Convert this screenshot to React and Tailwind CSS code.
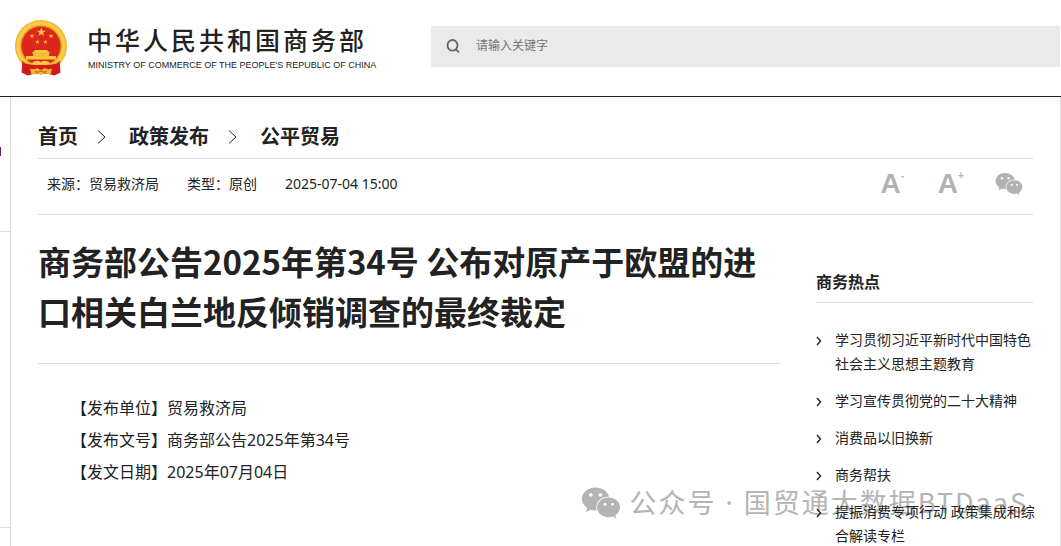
import React from 'react';
import { FaWeixin } from 'react-icons/fa';

const crumbs = ['首页', '政策发布', '公平贸易'];

const notice = [
  { label: '发布单位', value: '贸易救济局' },
  { label: '发布文号', value: '商务部公告2025年第34号' },
  { label: '发文日期', value: '2025年07月04日' },
];

const hotTopics = [
  ['学习贯彻习近平新时代中国特色', '社会主义思想主题教育'],
  ['学习宣传贯彻党的二十大精神'],
  ['消费品以旧换新'],
  ['商务帮扶'],
  ['提振消费专项行动 政策集成和综', '合解读专栏'],
];

const STAR = 'M0-1 .225-.309 .951-.309 .363.118 .588.809 0 .382-.588.809-.363.118-.951-.309-.225-.309Z';

function Emblem() {
  return (
    <svg viewBox="0 0 52 56" className="h-14 w-[52px] shrink-0" role="img" aria-label="国徽">
      <circle cx="26" cy="26" r="26" fill="#f0b02a" />
      <circle cx="26" cy="26" r="23" fill="none" stroke="#f8cb48" strokeWidth="3.500" />
      <circle cx="26" cy="26" r="19.800" fill="#dd271d" stroke="#cf8f1a" strokeWidth=".8" />
      <g fill="#f8c83a">
        <path d={STAR} transform="translate(26.3 12.2) scale(4.8)" />
        <path d={STAR} transform="translate(17 16) scale(2.6)" />
        <path d={STAR} transform="translate(36 16) scale(2.6)" />
        <path d={STAR} transform="translate(22.4 22) scale(2.4)" />
        <path d={STAR} transform="translate(30.4 22) scale(2.4)" />
        <path d="M19.500 30h13v1.500H34l1 2h-1V36h7v3.500H11V36h7v-2.500h-1l1-2h1.500Z" />
      </g>
      <path d="M18 33.500h16M18 36h16" stroke="#e39a28" strokeWidth=".5" />
      <path d="M7.500 40c1 3 5 4.500 10.500 4h16c5.500.5 9.500-1 10.500-4l1 12.500-6 3-6-1.500H18.500l-6 1.500-6-3Z" fill="#d01c19" />
      <path d="M9 41.500c5 3.500 11 2.500 17 2.500s12 1 17-2.500" fill="none" stroke="#f3b62b" strokeWidth="2" />
      <path d="M17 43c3-2.600 6-3 9-1 3-2 6-1.600 9 1-3 2.500-6 2.800-9 .8-3 2-6 1.700-9-.8Z" fill="#f6c545" />
      <path d="M15 48.500c3 1 5 1 7-.5l4 2 4-2c2 1.500 4 1.500 7 .5l-1.500 6-5.500-1-4 1.500-4-1.500-5.500 1Z" fill="#f0b835" />
      <path d="M20 51.500c2 1 4 .5 6-.5 2 1 4 1.500 6 .5" fill="none" stroke="#d01c19" strokeWidth=".8" />
    </svg>
  );
}

function SiteHeader() {
  return (
    <header className="flex items-center border-b border-[#222222] bg-white py-5 pr-px pl-[15px]">
      <a href="#home" className="flex w-[416px] shrink-0 items-center gap-5 text-[#222222]">
        <Emblem />
        <span className="flex flex-col pt-0.5 whitespace-nowrap">
          <span className="text-[25px] leading-8 font-medium tracking-[3px]">中华人民共和国商务部</span>
          <span className="pl-px font-['Liberation_Sans',sans-serif] text-[9px] leading-[18px]">
            MINISTRY OF COMMERCE OF THE PEOPLE'S REPUBLIC OF CHINA
          </span>
        </span>
      </a>
      <label className="-mt-1 flex h-[41px] grow items-center gap-4 bg-[#eaeaea] pl-[15px]">
        <svg viewBox="0 0 14 14" className="size-3.5 shrink-0" fill="none" stroke="#666666" strokeWidth="1.800" aria-hidden="true">
          <ellipse cx="6.500" cy="6.300" rx="5" ry="5.300" />
          <path d="m9.500 9.800 3.500 3.500" />
        </svg>
        <input
          type="text"
          aria-label="关键字"
          placeholder="请输入关键字"
          className="min-w-0 grow bg-transparent text-xs outline-none placeholder:text-[#757575]"
        />
      </label>
    </header>
  );
}

function Breadcrumb() {
  return (
    <nav className="flex h-[62px] items-center border-b border-[#dddddd] pt-[18px] text-xl leading-7 font-bold">
      {crumbs.map((name, i) => (
        <React.Fragment key={name}>
          {i > 0 && (
            <svg viewBox="0 0 9 14" className="mr-[23px] ml-[19px] h-3.5 w-[9px]" fill="none" stroke="#222222" aria-hidden="true">
              <path d="m1 .5 7 6.500-7 6.500" />
            </svg>
          )}
          <a href="#crumb">{name}</a>
        </React.Fragment>
      ))}
    </nav>
  );
}

function MetaBar() {
  return (
    <div className="flex h-14 items-center justify-between border-b border-[#dddddd] pr-2.5 pb-1.5 pl-[9px] text-sm">
      <div className="flex gap-7">
        <span>来源：贸易救济局</span>
        <span>类型：原创</span>
        <span>2025-07-04 15:00</span>
      </div>
      <div className="flex items-center gap-[33px] font-['Liberation_Sans',sans-serif] font-bold text-[#b2b2b2]">
        <button type="button" aria-label="缩小字号" className="flex items-start">
          <span className="text-[28px] leading-8">A</span>
          <span className="w-1 text-[10px] leading-4">-</span>
        </button>
        <button type="button" aria-label="放大字号" className="flex items-start">
          <span className="text-[28px] leading-8">A</span>
          <span className="w-1 text-[10px] leading-4">+</span>
        </button>
        <button type="button" aria-label="微信分享">
          <FaWeixin className="size-7" />
        </button>
      </div>
    </div>
  );
}

function Article() {
  return (
    <article className="min-w-0 grow">
      <h1 className="border-b border-[#dddddd] pt-[21px] pr-4 pb-[27px] font-['Noto_Sans_CJK_SC',sans-serif] text-[33px] leading-[50px] font-bold">
        商务部公告2025年第34号 公布对原产于欧盟的进口相关白兰地反倾销调查的最终裁定
      </h1>
      <div className="pt-7 pl-[33px] text-base leading-8">
        {notice.map((row) => (
          <p key={row.label}>【{row.label}】{row.value}</p>
        ))}
      </div>
    </article>
  );
}

function HotTopics() {
  return (
    <aside className="relative z-10 w-[217px] shrink-0 pt-[55px]">
      <h2 className="border-b border-[#dddddd] pb-2 text-base leading-6 font-bold">商务热点</h2>
      <ul className="flex flex-col gap-[13px] pt-[25px] text-sm leading-6">
        {hotTopics.map((lines) => (
          <li key={lines[0]} className="flex gap-[13px]">
            <svg viewBox="0 0 6 24" className="h-6 w-1.5 shrink-0" fill="none" stroke="#222222" strokeWidth="1.400" aria-hidden="true">
              <path d="m1 9 3.500 4L1 17" />
            </svg>
            <a href="#topic" className="whitespace-nowrap">
              {lines.map((line) => (
                <span key={line} className="block">{line}</span>
              ))}
            </a>
          </li>
        ))}
      </ul>
    </aside>
  );
}

export default function App() {
  return (
    <div className="flex min-h-screen flex-col bg-white font-['Noto_Sans','Noto_Sans_CJK_SC',sans-serif] text-[#222222]">
      <SiteHeader />
      <div className="flex grow bg-linear-to-b from-[#f7f7f7] to-white to-[8px]">
        {/* edge of the left column */}
        <div className="flex w-2.5 shrink-0 flex-col" aria-hidden="true">
          <div className="h-[135px] border-b border-[#dddddd] pt-[50px]">
            <div className="h-[9px] w-px bg-[#6b1f6b]" />
          </div>
          <div className="h-[296px] border-b border-[#dddddd]" />
        </div>
        <main className="relative min-w-0 grow border-x border-[#dddddd] px-[27px]">
          <Breadcrumb />
          <MetaBar />
          <div className="flex gap-9">
            <Article />
            <HotTopics />
          </div>
          <div className="absolute top-[385px] right-8 flex items-center gap-2 whitespace-nowrap text-[#b4b4b4]">
            <FaWeixin className="size-10" />
            <span className="font-['Noto_Sans_CJK_SC',sans-serif] text-[27px] leading-10 tracking-[2px]">
              公众号<span className="font-['Noto_Sans',sans-serif]"> · </span>国贸通大数据BTDaaS
            </span>
          </div>
        </main>
      </div>
    </div>
  );
}
